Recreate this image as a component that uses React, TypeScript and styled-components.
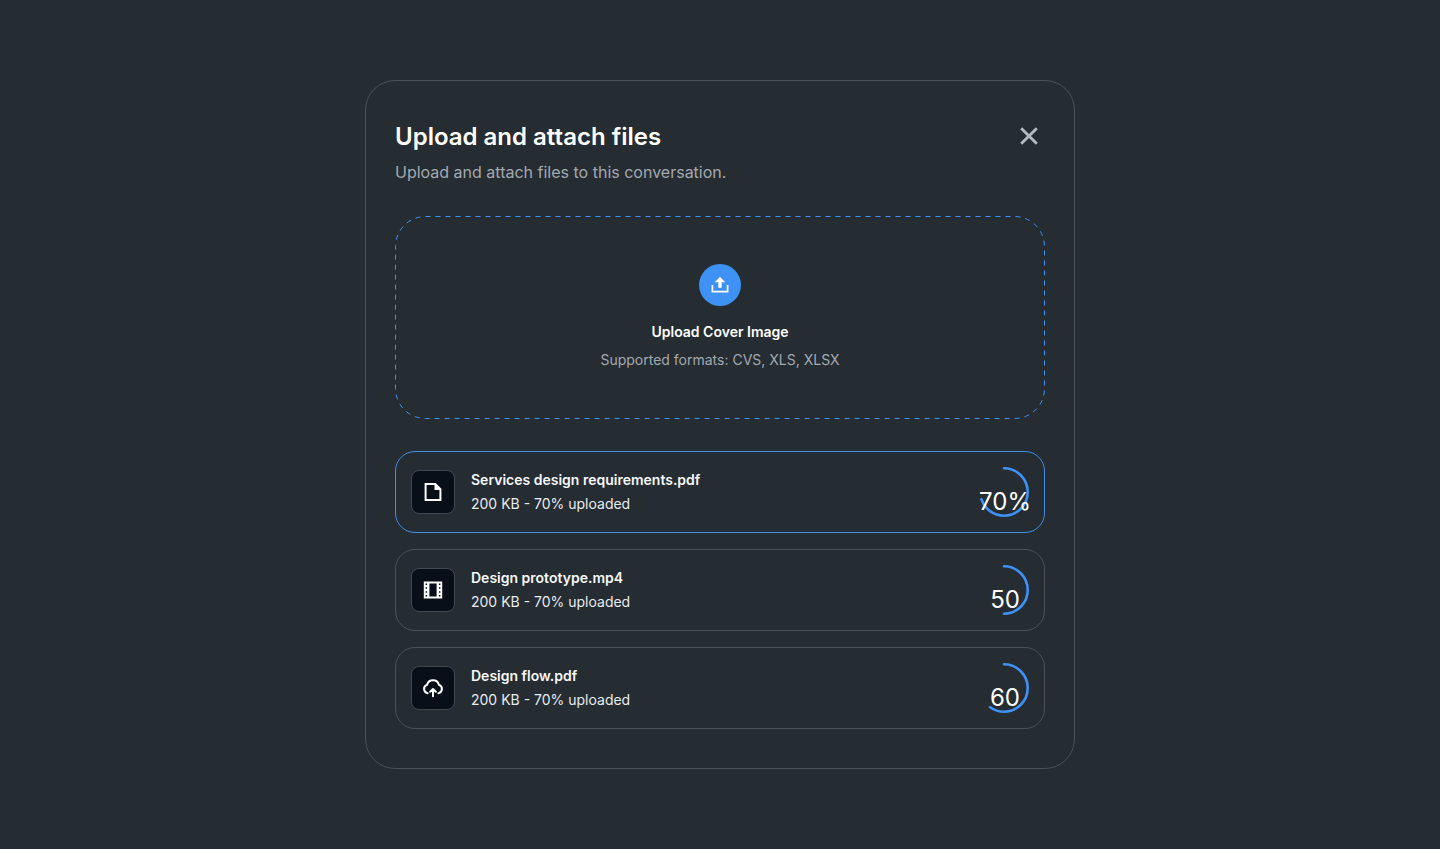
import React, { ReactNode } from "react";
import styled, { createGlobalStyle } from "styled-components";

const GlobalStyle = createGlobalStyle`
  *, *::before, *::after { box-sizing: border-box; }
  body {
    margin: 0;
    background: #252c32;
    color: #ffffff;
    font-family: Inter, "Liberation Sans", sans-serif;
  }
`;

const Page = styled.main`
  min-height: 100vh;
  display: flex;
  align-items: center;
  justify-content: center;
  padding: 24px;
`;

const Dialog = styled.section`
  width: 100%;
  max-width: 710px;
  padding: 39px 29px;
  border: 1px solid #4a5157;
  border-radius: 30px;
`;

const Header = styled.header`
  display: flex;
  align-items: flex-start;
  justify-content: space-between;
  margin-bottom: 32px;
`;

const Title = styled.h1`
  margin: 0 0 6px;
  font-size: 24px;
  line-height: 34px;
  font-weight: 600;
`;

const Subtitle = styled.p`
  margin: 0;
  font-size: 16px;
  line-height: 24px;
  color: #a3a9b0;
`;

const CloseButton = styled.button`
  display: flex;
  padding: 0;
  border: 0;
  background: none;
  color: #b4bac2;
  cursor: pointer;
`;

const DropZone = styled.button`
  position: relative;
  width: 100%;
  display: flex;
  flex-direction: column;
  align-items: center;
  margin: 0 0 32px;
  padding: 48px 16px 49px;
  border: 0;
  border-radius: 30px;
  background: none;
  color: inherit;
  font-family: inherit;
  cursor: pointer;
`;

const DashedOutline = styled.svg`
  position: absolute;
  inset: 0;
  width: 100%;
  height: 100%;

  rect {
    width: calc(100% - 1px);
    height: calc(100% - 1px);
  }
`;

const UploadBadge = styled.span`
  display: flex;
  align-items: center;
  justify-content: center;
  width: 42px;
  height: 42px;
  margin-bottom: 16px;
  border-radius: 50%;
  background: #3f92f5;
`;

const DropTitle = styled.span`
  margin-bottom: 8px;
  font-size: 14px;
  line-height: 20px;
  font-weight: 600;
`;

const DropHint = styled.span`
  font-size: 14px;
  line-height: 20px;
  color: #a3a9b0;
`;

const FileList = styled.ul`
  display: flex;
  flex-direction: column;
  gap: 16px;
  margin: 0;
  padding: 0;
  list-style: none;
`;

const FileRow = styled.li<{ $active?: boolean }>`
  display: flex;
  align-items: center;
  gap: 16px;
  height: 82px;
  padding: 0 15px;
  border: 1px solid ${(p) => (p.$active ? "#3f8fe6" : "#4a5157")};
  border-radius: 20px;
`;

const FileIcon = styled.span`
  display: flex;
  align-items: center;
  justify-content: center;
  width: 44px;
  height: 44px;
  border: 1px solid #414950;
  border-radius: 8px;
  background: #080f19;
`;

const FileText = styled.div`
  flex: 1;
  display: flex;
  flex-direction: column;
  gap: 4px;
  font-size: 14px;
  line-height: 20px;
`;

const FileName = styled.span`
  font-weight: 600;
  color: #f5f7f9;
`;

const FileMeta = styled.span`
  color: #e8ebee;
`;

const Progress = styled.svg`
  display: block;
  overflow: visible;
  font-family: inherit;
`;

const PageIcon = () => (
  <svg width="24" height="24" viewBox="0 0 24 24" fill="none" aria-hidden="true">
    <path d="M4.6 4H14.3L19.4 9.1V20H4.6Z" stroke="#fff" strokeWidth="2" />
    <path d="M13.5 3.5V9.9H20Z" fill="#fff" />
  </svg>
);

const FilmIcon = () => (
  <svg width="24" height="24" viewBox="0 0 24 24" fill="none" aria-hidden="true">
    <path
      fillRule="evenodd"
      fill="#fff"
      d="M2.8 3.5H21.2V20.5H2.8ZM8.4 5.4V18.6H15.6V5.4ZM4.6 5.4V6.9H6.1V5.4ZM4.6 9.2V10.7H6.1V9.2ZM4.6 13.2V14.7H6.1V13.2ZM4.6 17.1V18.6H6.1V17.1ZM17.9 5.4V6.9H19.4V5.4ZM17.9 9.2V10.7H19.4V9.2ZM17.9 13.2V14.7H19.4V13.2ZM17.9 17.1V18.6H19.4V17.1Z"
    />
  </svg>
);

const CloudIcon = () => (
  <svg width="24" height="24" viewBox="0 0 24 24" fill="none" stroke="#fff" strokeWidth="2" strokeLinecap="round" strokeLinejoin="round" aria-hidden="true">
    <path d="M6.6 17.2A4.3 4.3 0 0 1 6 8.9A6.2 6.2 0 0 1 18 8.9A4.3 4.3 0 0 1 17.4 17.2" />
    <path d="M12 20.2V13.2M9.2 15.8L12 13L14.8 15.8" />
  </svg>
);

const files: { name: string; value: number; label: string; icon: ReactNode; active?: boolean }[] = [
  { name: "Services design requirements.pdf", value: 70, label: "70%", icon: <PageIcon />, active: true },
  { name: "Design prototype.mp4", value: 50, label: "50", icon: <FilmIcon /> },
  { name: "Design flow.pdf", value: 60, label: "60", icon: <CloudIcon /> },
];

const ProgressRing = ({ value, label }: { value: number; label: string }) => (
  <Progress width="50" height="50" viewBox="0 0 50 50" role="img" aria-label={`${value}% uploaded`}>
    <circle
      cx="25"
      cy="25"
      r="23.7"
      fill="none"
      stroke="#3f92f5"
      strokeWidth="2.6"
      strokeLinecap="round"
      pathLength={100}
      strokeDasharray={`${value} 100`}
      transform="rotate(-90 25 25)"
    />
    <text x="26" y="43" textAnchor="middle" fontSize="24" fill="#fff">
      {label}
    </text>
  </Progress>
);

export default function App() {
  return (
    <Page>
      <GlobalStyle />
      <Dialog aria-labelledby="dialog-title">
        <Header>
          <div>
            <Title id="dialog-title">Upload and attach files</Title>
            <Subtitle>Upload and attach files to this conversation.</Subtitle>
          </div>
          <CloseButton type="button" aria-label="Close">
            <svg width="32" height="32" viewBox="0 0 32 32" fill="none" stroke="currentColor" strokeWidth="2.8">
              <path d="M8.2 8.2L23.8 23.8M23.8 8.2L8.2 23.8" />
            </svg>
          </CloseButton>
        </Header>

        <DropZone type="button">
          <DashedOutline aria-hidden="true">
            <rect x="0.5" y="0.5" rx="30" fill="none" stroke="#3f92f5" strokeDasharray="5 5" />
          </DashedOutline>
          <UploadBadge>
            <svg width="20" height="20" viewBox="0 0 20 20" fill="#fff" aria-hidden="true">
              <path d="M10 1.8L15.3 7.3H11.7V12.8H8.3V7.3H4.7Z" />
              <path d="M2.4 10V16.7H17.6V10" fill="none" stroke="#fff" strokeWidth="1.7" />
            </svg>
          </UploadBadge>
          <DropTitle>Upload Cover Image</DropTitle>
          <DropHint>Supported formats: CVS, XLS, XLSX</DropHint>
        </DropZone>

        <FileList>
          {files.map((file) => (
            <FileRow key={file.name} $active={file.active}>
              <FileIcon>{file.icon}</FileIcon>
              <FileText>
                <FileName>{file.name}</FileName>
                <FileMeta>200 KB - 70% uploaded</FileMeta>
              </FileText>
              <ProgressRing value={file.value} label={file.label} />
            </FileRow>
          ))}
        </FileList>
      </Dialog>
    </Page>
  );
}
